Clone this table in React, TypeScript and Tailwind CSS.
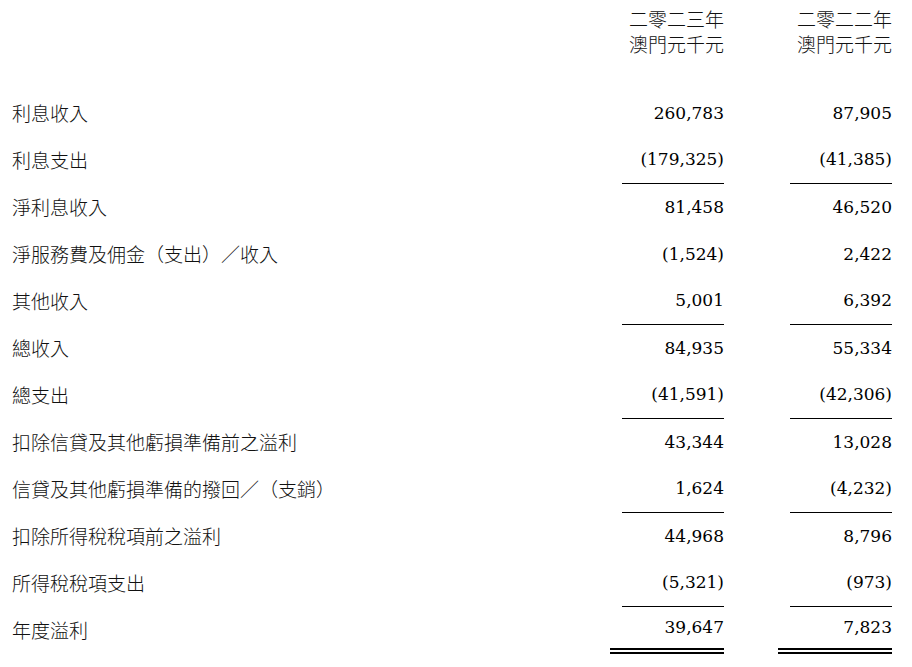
import React from 'react';

type Row = {
  label: string;
  cur: string;
  prev: string;
  rule?: 'single' | 'double';
};

const rows: Row[] = [
  { label: '利息收入', cur: '260,783', prev: '87,905' },
  { label: '利息支出', cur: '(179,325)', prev: '(41,385)', rule: 'single' },
  { label: '淨利息收入', cur: '81,458', prev: '46,520' },
  { label: '淨服務費及佣金（支出）／收入', cur: '(1,524)', prev: '2,422' },
  { label: '其他收入', cur: '5,001', prev: '6,392', rule: 'single' },
  { label: '總收入', cur: '84,935', prev: '55,334' },
  { label: '總支出', cur: '(41,591)', prev: '(42,306)', rule: 'single' },
  { label: '扣除信貸及其他虧損準備前之溢利', cur: '43,344', prev: '13,028' },
  { label: '信貸及其他虧損準備的撥回／（支銷）', cur: '1,624', prev: '(4,232)', rule: 'single' },
  { label: '扣除所得稅稅項前之溢利', cur: '44,968', prev: '8,796' },
  { label: '所得稅稅項支出', cur: '(5,321)', prev: '(973)', rule: 'single' },
  { label: '年度溢利', cur: '39,647', prev: '7,823', rule: 'double' },
];

const cjk = "font-['Noto_Sans_CJK_TC','Noto_Sans_CJK_SC',sans-serif] font-light";
const num = "font-['DejaVu_Serif','Liberation_Serif',serif]";

function Amount({ value, rule }: { value: string; rule?: Row['rule'] }) {
  return (
    <div className="flex h-[47px] flex-col">
      <div className={`flex flex-1 items-center justify-end text-[17px] text-black ${num}`}>{value}</div>
      {rule === 'single' && <div className="h-px w-[102px] self-end bg-black" />}
      {rule === 'double' && <div className="h-[6px] w-full border-y-2 border-black" />}
    </div>
  );
}

export default function App() {
  return (
    <div className="min-h-[667px] w-[912px] bg-white pl-[12px] pr-[20px] pt-[6px]">
      <div className={`grid grid-cols-[1fr_114px_114px] gap-x-[54px] text-[19px] leading-[25px] text-[#111] ${cjk}`}>
        <div />
        <div className="text-right">
          <div>二零二三年</div>
          <div>澳門元千元</div>
        </div>
        <div className="text-right">
          <div>二零二二年</div>
          <div>澳門元千元</div>
        </div>
      </div>

      <div className="mt-[34px] grid grid-cols-[1fr_114px_114px] gap-x-[54px]">
        {rows.map((r) => (
          <React.Fragment key={r.label}>
            <div className={`flex h-[47px] items-center whitespace-nowrap text-[19px] text-[#111] ${cjk}`}>
              {r.label}
            </div>
            <Amount value={r.cur} rule={r.rule} />
            <Amount value={r.prev} rule={r.rule} />
          </React.Fragment>
        ))}
      </div>
    </div>
  );
}
